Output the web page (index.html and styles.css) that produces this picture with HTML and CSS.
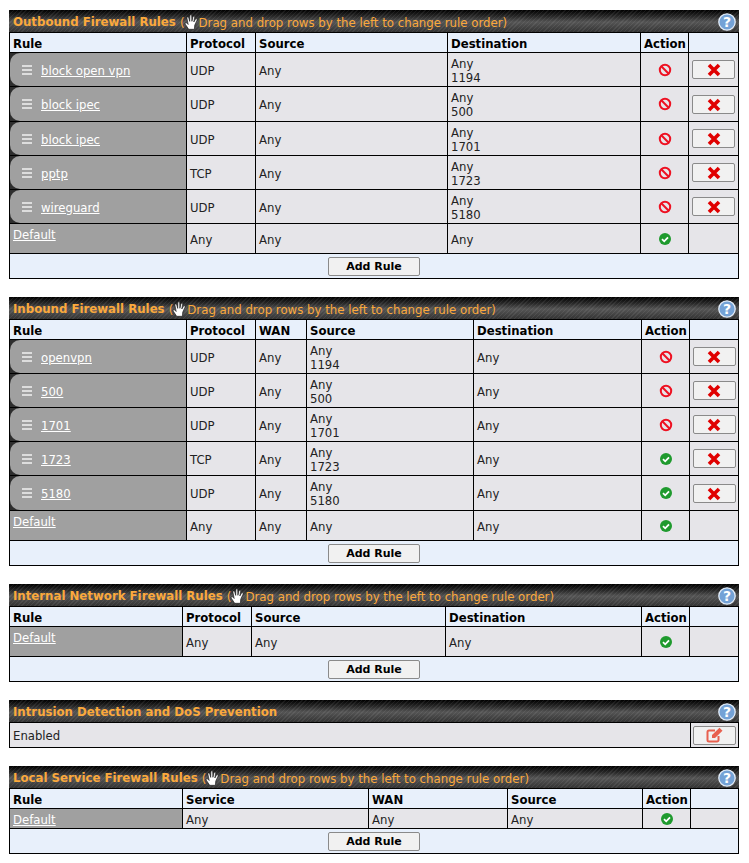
FILE: index.html
```html
<!DOCTYPE html>
<html lang="en">
<head>
<meta charset="utf-8">
<title>Firewall Rules</title>
<link rel="stylesheet" href="styles.css">
</head>
<body>
<svg class="defs" width="0" height="0" aria-hidden="true">
  <symbol id="hand" viewBox="0 0 15 16">
    <path d="M4.700 15.300 1.300 10.200c-.7-1.100.7-2.100 1.600-1.100l1.300 1.400L2.900 4c-.2-1.200 1.500-1.600 1.800-.3l1 3.700.2-5.600c0-1.300 1.800-1.300 1.800 0l.2 5.500 1-4.300c.3-1.200 2-.9 1.700.4L9.800 8l1.600-2.700c.7-1.100 2.200-.4 1.600.9l-2.300 5-.3 4.100z" fill="#fff" stroke="#111" stroke-width=".6"/>
  </symbol>
  <symbol id="help" viewBox="0 0 18 18">
    <circle cx="9" cy="9" r="8.200" fill="#74a2d6" stroke="#e3ecf7" stroke-width="1.300"/>
  </symbol>
  <symbol id="ban" viewBox="0 0 14 14">
    <circle cx="7" cy="7" r="5.200" fill="none" stroke="#ee1122" stroke-width="2"/>
    <path d="M3.300 3.300l7.400 7.400" stroke="#ee1122" stroke-width="2"/>
  </symbol>
  <symbol id="ok" viewBox="0 0 14 14">
    <circle cx="7" cy="7" r="6" fill="#1f9a2e"/>
    <path d="M4 7.200l2.200 2.100L10 5.300" fill="none" stroke="#fff" stroke-width="1.800"/>
  </symbol>
  <symbol id="del" viewBox="0 0 14 14">
    <path d="M2 2l10 10M12 2 2 12" stroke="#e00000" stroke-width="3.600"/>
  </symbol>
  <symbol id="edit" viewBox="0 0 18 16">
    <path d="M12.500 9v4a1.500 1.500 0 0 1-1.500 1.500H3A1.500 1.500 0 0 1 1.500 13V5A1.500 1.500 0 0 1 3 3.500h6" fill="none" stroke="#e8604f" stroke-width="2"/>
    <path d="M6 8 13.500 .8l3 3L9 11H6z" fill="#e8604f"/>
  </symbol>
</svg>

<section class="panel">
  <h2 class="bar"><span class="bar-title">Outbound Firewall Rules</span> <span class="bar-note">(<svg class="hand"><use href="#hand"/></svg>Drag and drop rows by the left to change rule order)</span><span class="help"><svg class="help-disc"><use href="#help"/></svg><span class="help-mark">?</span></span></h2>
  <table class="grid">
    <colgroup><col class="c-177"><col class="c-69"><col class="c-192"><col class="c-193"><col class="c-48"><col></colgroup>
    <tr class="head"><th>Rule</th><th>Protocol</th><th>Source</th><th>Destination</th><th>Action</th><th></th></tr>
    <tr class="row"><td class="rule"><div class="pill"><span class="grip"></span><a href="#">block open vpn</a></div></td><td>UDP</td><td>Any</td><td>Any<br>1194</td><td class="act"><svg class="ico"><use href="#ban"/></svg></td><td class="btn-cell"><button class="x"><svg class="xi"><use href="#del"/></svg></button></td></tr>
    <tr class="row tall"><td class="rule"><div class="pill"><span class="grip"></span><a href="#">block ipec</a></div></td><td>UDP</td><td>Any</td><td>Any<br>500</td><td class="act"><svg class="ico"><use href="#ban"/></svg></td><td class="btn-cell"><button class="x"><svg class="xi"><use href="#del"/></svg></button></td></tr>
    <tr class="row"><td class="rule"><div class="pill"><span class="grip"></span><a href="#">block ipec</a></div></td><td>UDP</td><td>Any</td><td>Any<br>1701</td><td class="act"><svg class="ico"><use href="#ban"/></svg></td><td class="btn-cell"><button class="x"><svg class="xi"><use href="#del"/></svg></button></td></tr>
    <tr class="row"><td class="rule"><div class="pill"><span class="grip"></span><a href="#">pptp</a></div></td><td>TCP</td><td>Any</td><td>Any<br>1723</td><td class="act"><svg class="ico"><use href="#ban"/></svg></td><td class="btn-cell"><button class="x"><svg class="xi"><use href="#del"/></svg></button></td></tr>
    <tr class="row"><td class="rule"><div class="pill"><span class="grip"></span><a href="#">wireguard</a></div></td><td>UDP</td><td>Any</td><td>Any<br>5180</td><td class="act"><svg class="ico"><use href="#ban"/></svg></td><td class="btn-cell"><button class="x"><svg class="xi"><use href="#del"/></svg></button></td></tr>
    <tr class="row-default"><td class="rule plain"><a href="#">Default</a></td><td>Any</td><td>Any</td><td>Any</td><td class="act"><svg class="ico"><use href="#ok"/></svg></td><td></td></tr>
    <tr class="foot"><td colspan="6"><button class="add">Add Rule</button></td></tr>
  </table>
</section>

<section class="panel">
  <h2 class="bar"><span class="bar-title">Inbound Firewall Rules</span> <span class="bar-note">(<svg class="hand"><use href="#hand"/></svg>Drag and drop rows by the left to change rule order)</span><span class="help"><svg class="help-disc"><use href="#help"/></svg><span class="help-mark">?</span></span></h2>
  <table class="grid">
    <colgroup><col class="c-177"><col class="c-69"><col class="c-51"><col class="c-167"><col class="c-168"><col class="c-48"><col></colgroup>
    <tr class="head"><th>Rule</th><th>Protocol</th><th>WAN</th><th>Source</th><th>Destination</th><th>Action</th><th></th></tr>
    <tr class="row"><td class="rule"><div class="pill"><span class="grip"></span><a href="#">openvpn</a></div></td><td>UDP</td><td>Any</td><td>Any<br>1194</td><td>Any</td><td class="act"><svg class="ico"><use href="#ban"/></svg></td><td class="btn-cell"><button class="x"><svg class="xi"><use href="#del"/></svg></button></td></tr>
    <tr class="row"><td class="rule"><div class="pill"><span class="grip"></span><a href="#">500</a></div></td><td>UDP</td><td>Any</td><td>Any<br>500</td><td>Any</td><td class="act"><svg class="ico"><use href="#ban"/></svg></td><td class="btn-cell"><button class="x"><svg class="xi"><use href="#del"/></svg></button></td></tr>
    <tr class="row"><td class="rule"><div class="pill"><span class="grip"></span><a href="#">1701</a></div></td><td>UDP</td><td>Any</td><td>Any<br>1701</td><td>Any</td><td class="act"><svg class="ico"><use href="#ban"/></svg></td><td class="btn-cell"><button class="x"><svg class="xi"><use href="#del"/></svg></button></td></tr>
    <tr class="row"><td class="rule"><div class="pill"><span class="grip"></span><a href="#">1723</a></div></td><td>TCP</td><td>Any</td><td>Any<br>1723</td><td>Any</td><td class="act"><svg class="ico"><use href="#ok"/></svg></td><td class="btn-cell"><button class="x"><svg class="xi"><use href="#del"/></svg></button></td></tr>
    <tr class="row tall"><td class="rule"><div class="pill"><span class="grip"></span><a href="#">5180</a></div></td><td>UDP</td><td>Any</td><td>Any<br>5180</td><td>Any</td><td class="act"><svg class="ico"><use href="#ok"/></svg></td><td class="btn-cell"><button class="x"><svg class="xi"><use href="#del"/></svg></button></td></tr>
    <tr class="row-default"><td class="rule plain"><a href="#">Default</a></td><td>Any</td><td>Any</td><td>Any</td><td>Any</td><td class="act"><svg class="ico"><use href="#ok"/></svg></td><td></td></tr>
    <tr class="foot"><td colspan="7"><button class="add">Add Rule</button></td></tr>
  </table>
</section>

<section class="panel">
  <h2 class="bar"><span class="bar-title">Internal Network Firewall Rules</span> <span class="bar-note">(<svg class="hand"><use href="#hand"/></svg>Drag and drop rows by the left to change rule order)</span><span class="help"><svg class="help-disc"><use href="#help"/></svg><span class="help-mark">?</span></span></h2>
  <table class="grid">
    <colgroup><col class="c-173"><col class="c-69"><col class="c-195"><col class="c-194"><col class="c-48"><col></colgroup>
    <tr class="head"><th>Rule</th><th>Protocol</th><th>Source</th><th>Destination</th><th>Action</th><th></th></tr>
    <tr class="row-default"><td class="rule plain"><a href="#">Default</a></td><td>Any</td><td>Any</td><td>Any</td><td class="act"><svg class="ico"><use href="#ok"/></svg></td><td></td></tr>
    <tr class="foot"><td colspan="6"><button class="add">Add Rule</button></td></tr>
  </table>
</section>

<section class="panel">
  <h2 class="bar"><span class="bar-title">Intrusion Detection and DoS Prevention</span><span class="help"><svg class="help-disc"><use href="#help"/></svg><span class="help-mark">?</span></span></h2>
  <table class="grid">
    <colgroup><col class="c-681"><col></colgroup>
    <tr class="status"><td>Enabled</td><td class="btn-cell"><button class="x"><svg class="ed"><use href="#edit"/></svg></button></td></tr>
  </table>
</section>

<section class="panel">
  <h2 class="bar"><span class="bar-title">Local Service Firewall Rules</span> <span class="bar-note">(<svg class="hand"><use href="#hand"/></svg>Drag and drop rows by the left to change rule order)</span><span class="help"><svg class="help-disc"><use href="#help"/></svg><span class="help-mark">?</span></span></h2>
  <table class="grid">
    <colgroup><col class="c-173"><col class="c-186"><col class="c-139"><col class="c-135"><col class="c-48"><col></colgroup>
    <tr class="head"><th>Rule</th><th>Service</th><th>WAN</th><th>Source</th><th>Action</th><th></th></tr>
    <tr class="row-thin"><td class="rule plain mid"><a href="#">Default</a></td><td>Any</td><td>Any</td><td>Any</td><td class="act"><svg class="ico"><use href="#ok"/></svg></td><td></td></tr>
    <tr class="foot"><td colspan="6"><button class="add">Add Rule</button></td></tr>
  </table>
</section>
</body>
</html>
```
FILE: styles.css
```css
html, body { margin: 0; padding: 0; background: #fff; }
body {
  padding: 10px 10px 0 9px;
  font-family: "DejaVu Sans", Verdana, sans-serif;
  font-size: 11.700px;
  color: #222;
  width: 730px;
}
.defs { position: absolute; }
.panel { margin-bottom: 18px; }
.bar {
  margin: 0;
  height: 22px;
  line-height: 25px;
  padding-left: 4px;
  position: relative;
  font-size: 11.750px;
  white-space: nowrap;
  color: #fba93c;
  background:
    repeating-linear-gradient(135deg, rgba(255,255,255,.07) 0 1px, transparent 1px 3px),
    linear-gradient(#000 0, #2a2a2a 30%, #555 55%, #333 100%);
}
.bar-title { font-weight: bold; }
.bar-note { font-weight: normal; position: relative; top: 1px; }
.hand { width: 15px; height: 16px; vertical-align: -3px; margin-left: -1px; }
.help { position: absolute; right: 3px; top: 3px; width: 18px; height: 18px; }
.help-disc { position: absolute; inset: 0; width: 18px; height: 18px; }
.help-mark {
  position: absolute; inset: 0; text-align: center; line-height: 18px;
  color: #fff; font-weight: bold; font-size: 14px;
}
.grid {
  width: 730px;
  table-layout: fixed;
  border-collapse: collapse;
  border: 1px solid #000;
  border-top: 0;
}
.grid th, .grid td {
  box-sizing: border-box;
  border: 1px solid #000;
  padding: 2px 3px 0;
  text-align: left;
  line-height: 14px;
}
.grid .head th {
  height: 20px;
  background: #e8f0fb;
  color: #000;
  padding-top: 3px;
}
.row td { height: 34px; background: #e6e5e9; }
.row.tall td { height: 35px; }
.row-default td { height: 30px; background: #e6e5e9; }
.row-thin td { height: 20px; background: #e6e5e9; }
.status td { height: 25px; background: #e6e5e9; }
.grid .rule { padding: 0; background: #2e2e2e; }
.grid .rule.plain { background: #a0a0a0; padding: 4px 3px 0; vertical-align: top; }
.grid .rule.plain.mid { vertical-align: middle; padding-top: 2px; }
.pill {
  min-height: 33px;
  background: #a0a0a0;
  border-radius: 10px 0 0 10px;
  display: flex;
  align-items: center;
  padding-left: 12px;
  gap: 9px;
}
.tall .pill { min-height: 34px; }
.pill a { position: relative; top: 1px; }
.grip {
  width: 10px; height: 6px;
  border-top: 2px solid #ddd;
  border-bottom: 2px solid #ddd;
  position: relative;
}
.grip::after {
  content: ""; position: absolute; left: 0; right: 0; top: 2px; height: 2px; background: #ddd;
}
.rule a { color: #fff; text-decoration: underline; }
.grid .act { text-align: center; padding: 0; }
.ico { width: 14px; height: 14px; vertical-align: middle; }
.grid .btn-cell { padding: 0; text-align: center; }
.x {
  width: 43px;
  height: 19px;
  padding: 0;
  background: #f1f1f1;
  border: 1px solid #8a8a8a;
  border-radius: 2px;
  vertical-align: middle;
}
.xi { width: 14px; height: 14px; display: block; margin: 1px auto 0; }
.ed { width: 18px; height: 16px; display: block; margin: 0 auto; }
.grid .foot td {
  height: 25px;
  background: #e8f0fb;
  text-align: center;
  padding: 0;
}
.add {
  width: 92px;
  height: 19px;
  padding: 0;
  background: #f1f1f1;
  border: 1px solid #8a8a8a;
  border-radius: 2px;
  font-family: "DejaVu Sans", Verdana, sans-serif;
  font-size: 11px;
  font-weight: bold;
  color: #000;
}
.c-177 { width: 177px; }
.c-173 { width: 173px; }
.c-69 { width: 69px; }
.c-51 { width: 51px; }
.c-192 { width: 192px; }
.c-193 { width: 193px; }
.c-195 { width: 194px; }
.c-194 { width: 196px; }
.c-167 { width: 167px; }
.c-168 { width: 168px; }
.c-48 { width: 48px; }
.c-681 { width: 681px; }
.c-186 { width: 186px; }
.c-139 { width: 139px; }
.c-135 { width: 135px; }
```
